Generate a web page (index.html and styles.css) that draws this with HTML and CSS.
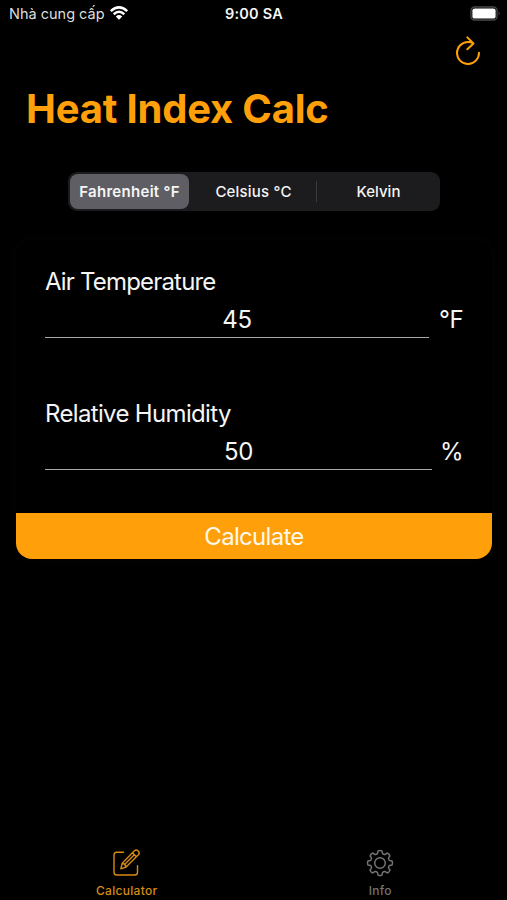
FILE: index.html
```html
<!DOCTYPE html>
<html lang="vi">
<head>
<meta charset="utf-8">
<title>Heat Index Calc</title>
<link rel="stylesheet" href="styles.css">
</head>
<body>
<div class="app">
  <header class="status">
    <div class="carrier"><span class="carrier-name">Nhà cung cấp</span>
      <svg class="wifi" width="20" height="15" viewBox="0 0 20 15"><path d="M1.8 5.1Q10-2.4 18.2 5.1M4.7 8.2Q10 3.4 15.3 8.2" fill="none" stroke="#fff" stroke-width="2.5"/><path d="M6.8 10.5Q10 7.7 13.2 10.5L10 13.8Z" fill="#fff"/></svg>
    </div>
    <time class="time">9:00 SA</time>
    <svg class="battery" width="31" height="16" viewBox="0 0 31 16"><rect x="1" y="1" width="26" height="13" rx="3.6" fill="none" stroke="#4a4a4a" stroke-width="1.3"/><rect x="2.4" y="2.4" width="23.2" height="10.2" rx="2.2" fill="#fff"/><path d="M28.6 5.2Q30.6 7.5 28.6 9.8Z" fill="#4a4a4a"/></svg>
  </header>
  <nav class="toolbar">
    <svg width="28" height="32" viewBox="0 0 28 32" fill="none" stroke="#ff9f0a" stroke-width="2" stroke-linecap="round" stroke-linejoin="round"><path d="M25 17.8A11 11 0 1 1 14 7Q16.8 7 19 8M13.3 2.4L19.5 8.5L13.3 14.3"/></svg>
  </nav>
  <h1 class="title">Heat Index Calc</h1>
  <div class="segments">
    <div class="segment selected"><span>Fahrenheit °F</span></div>
    <div class="segment celsius"><span>Celsius °C</span></div>
    <div class="segment divided"><span>Kelvin</span></div>
  </div>
  <main class="card">
    <section class="field">
      <label class="label air">Air Temperature</label>
      <div class="row"><div class="value">45</div><div class="unit">°F</div></div>
    </section>
    <section class="field">
      <label class="label humidity">Relative Humidity</label>
      <div class="row percent"><div class="value">50</div><div class="unit">%</div></div>
    </section>
    <button class="calculate">Calculate</button>
  </main>
  <footer class="tabs">
    <div class="tab active">
      <svg width="30" height="30" viewBox="0 0 30 30" fill="none" stroke="currentColor" stroke-width="1.4" stroke-linecap="round" stroke-linejoin="round"><path d="M11.5 4.2H4.8Q2 4.2 2 7V24.2Q2 27 4.8 27H22.7Q25.5 27 25.5 24.2V17.8"/><path d="M10.2 15.3L22.4 2.8Q24.2 1 26.2 2.9Q28.2 4.9 26.4 6.8L14.1 19L8.8 20.8ZM10.2 15.3Q13.2 15.6 14.1 19M20.5 4.8L24.4 8.7M12.5 16.6L22.3 6.8"/></svg>
      <span>Calculator</span>
    </div>
    <div class="tab">
      <svg width="30" height="30" viewBox="-15 -15 30 30" fill="none" stroke="currentColor" stroke-width="1.5" stroke-linejoin="round"><path d="M9.47-2.54L12.1-1.94Q13 0 12.1 1.94L9.47 2.54Q8.4 3.5 8.49 4.9L9.93 7.19Q9.2 9.2 7.19 9.93L4.9 8.49Q3.5 8.4 2.54 9.47L1.94 12.1Q0 13-1.94 12.1L-2.54 9.47Q-3.5 8.4-4.9 8.49L-7.19 9.93Q-9.2 9.2-9.93 7.19L-8.49 4.9Q-8.4 3.5-9.47 2.54L-12.1 1.94Q-13 0-12.1-1.94L-9.47-2.54Q-8.4-3.5-8.49-4.9L-9.93-7.19Q-9.2-9.2-7.19-9.93L-4.9-8.49Q-3.5-8.4-2.54-9.47L-1.94-12.1Q0-13 1.94-12.1L2.54-9.47Q3.5-8.4 4.9-8.49L7.19-9.93Q9.2-9.2 9.93-7.19L8.49-4.9Q8.4-3.5 9.47-2.54Z"/><circle r="5.3"/></svg>
      <span>Info</span>
    </div>
  </footer>
</div>
</body>
</html>
```
FILE: styles.css
```css
* { box-sizing: border-box; }
body { margin: 0; background: #000; color: #f5f5f5; font-family: Inter, "Liberation Sans", sans-serif; }
.app { width: 507px; height: 900px; overflow: hidden; display: flex; flex-direction: column; }
.status { height: 27px; flex: none; display: grid; grid-template-columns: 1fr auto 1fr; align-items: center; padding: 0 6px 0 9px; }
.carrier { display: flex; align-items: center; gap: 4px; font-size: 14.5px; color: #ddd; white-space: nowrap; }
.time { font-size: 14.5px; font-weight: 600; letter-spacing: .2px; margin-right: 2px; }
.battery { justify-self: end; }
.toolbar { height: 49px; flex: none; display: flex; justify-content: flex-end; padding: 8px 25px 0 0; }
.title { margin: 8px 0 0 26px; height: 50px; line-height: 50px; font-size: 40px; font-weight: 700; letter-spacing: -.2px; color: #ff9f0a; white-space: nowrap; }
.segments { margin: 38px 67px 0 68px; height: 39px; flex: none; display: grid; grid-template-columns: 123px 125px 1fr; background: #1c1c1f; border-radius: 9px; font-size: 15px; font-weight: 500; }
.segment { display: flex; align-items: center; justify-content: center; white-space: nowrap; }
.selected { margin: 2px; width: 119px; background: #5f5e64; border-radius: 8px; font-weight: 600; letter-spacing: .3px; }
.celsius { letter-spacing: .2px; }
.divided { border-left: 1px solid #3b3b3f; height: 21px; align-self: center; }
.card { margin: 29px 15px 0 16px; height: 319px; flex: none; display: flex; flex-direction: column; border-radius: 16px; overflow: hidden; font-size: 24px; box-shadow: 0 0 12px rgba(255, 255, 255, .025); }
.field { height: 132px; padding: 26px 29px 0; }
.label { display: block; height: 30px; line-height: 31px; white-space: nowrap; width: max-content; }
.air { letter-spacing: -.82px; }
.humidity { letter-spacing: -.66px; }
.row { display: grid; grid-template-columns: 384px auto; justify-content: space-between; height: 42px; }
.percent { grid-template-columns: 387px auto; }
.value { text-align: center; height: 42px; line-height: 47px; border-bottom: 1px solid #aaa; letter-spacing: -.3px; }
.unit { line-height: 47px; letter-spacing: -.6px; }
.calculate { margin: auto 0 0; padding: 0; border: 0; width: 100%; height: 46px; flex: none; background: #ff9f0a; color: #fff8e8; font: inherit; line-height: 47px; letter-spacing: -.7px; }
.tabs { margin-top: auto; height: 52px; flex: none; display: grid; grid-template-columns: 1fr 1fr; }
.tab { display: flex; flex-direction: column; align-items: center; color: #737373; font-size: 12px; font-weight: 500; letter-spacing: .3px; }
.tab span { line-height: 15px; margin-top: 5px; }
.active { color: #d68b14; }
```
